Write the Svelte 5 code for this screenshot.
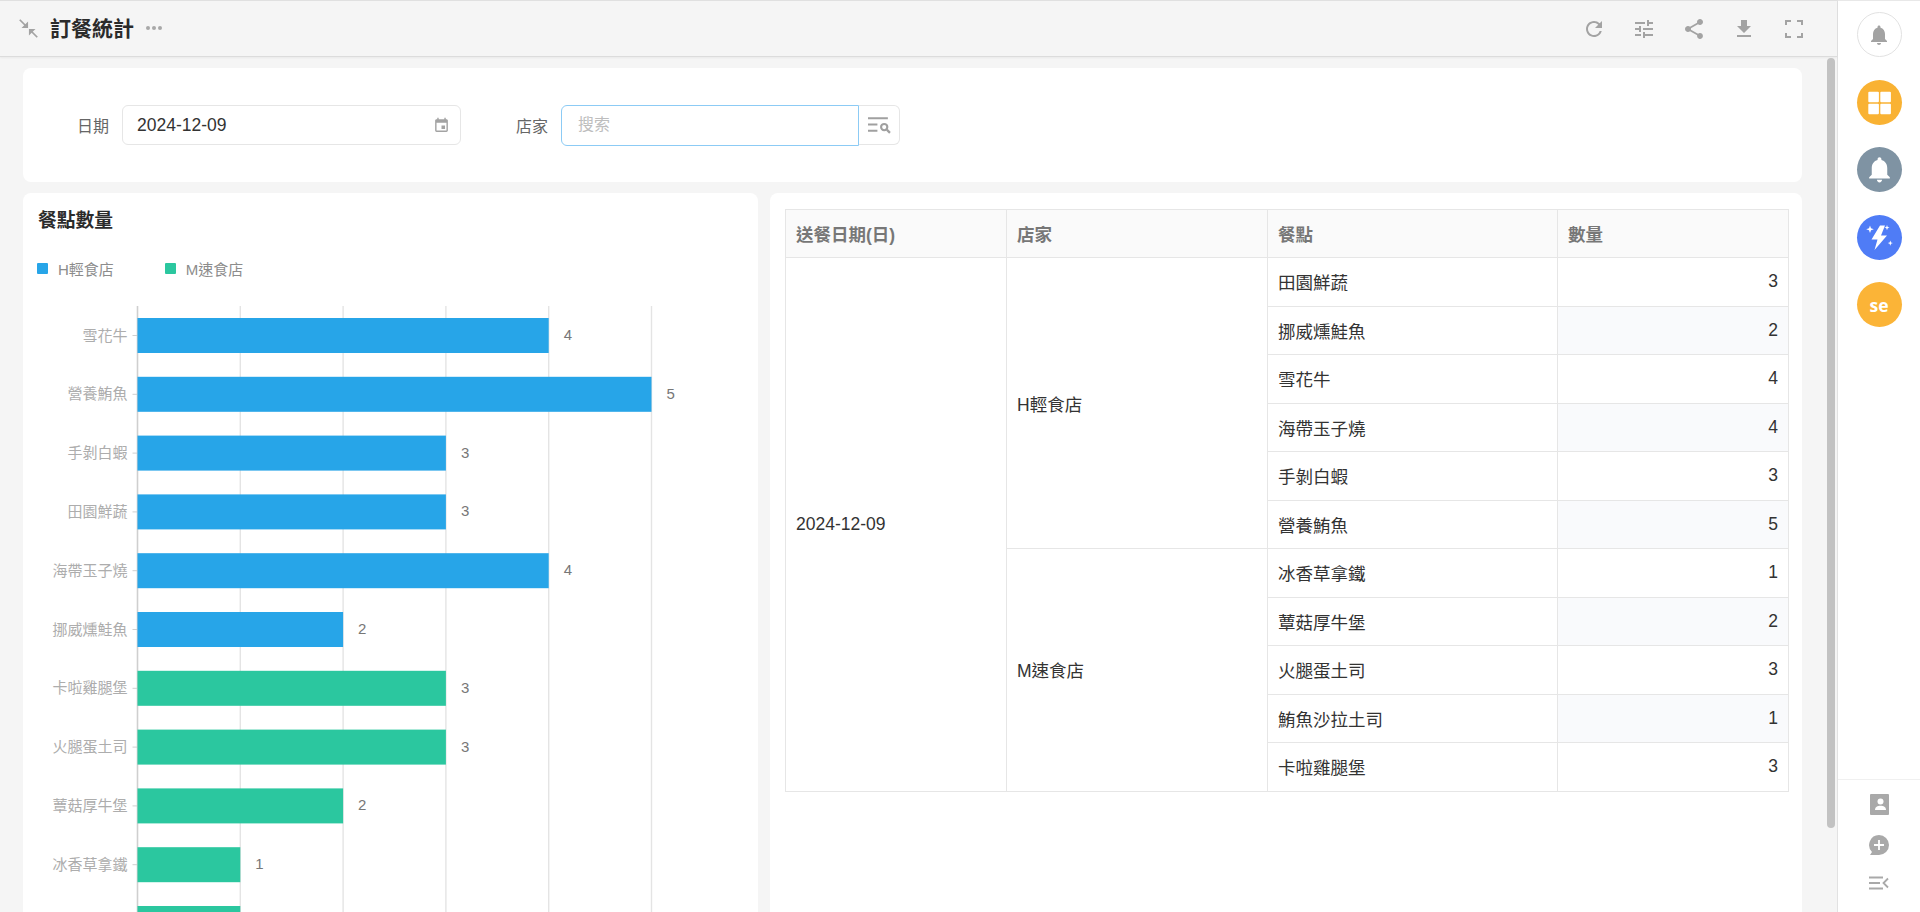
<script>
  const chartData = [
    { name: '雪花牛', value: 4, store: 'h' },
    { name: '營養鮪魚', value: 5, store: 'h' },
    { name: '手剝白蝦', value: 3, store: 'h' },
    { name: '田園鮮蔬', value: 3, store: 'h' },
    { name: '海帶玉子燒', value: 4, store: 'h' },
    { name: '挪威燻鮭魚', value: 2, store: 'h' },
    { name: '卡啦雞腿堡', value: 3, store: 'm' },
    { name: '火腿蛋土司', value: 3, store: 'm' },
    { name: '蕈菇厚牛堡', value: 2, store: 'm' },
    { name: '冰香草拿鐵', value: 1, store: 'm' },
    { name: '鮪魚沙拉土司', value: 1, store: 'm' }
  ];

  const stores = [
    {
      name: 'H輕食店',
      items: [['田園鮮蔬', 3], ['挪威燻鮭魚', 2], ['雪花牛', 4], ['海帶玉子燒', 4], ['手剝白蝦', 3], ['營養鮪魚', 5]]
    },
    {
      name: 'M速食店',
      items: [['冰香草拿鐵', 1], ['蕈菇厚牛堡', 2], ['火腿蛋土司', 3], ['鮪魚沙拉土司', 1], ['卡啦雞腿堡', 3]]
    }
  ];

  const totalRows = stores.reduce((n, s) => n + s.items.length, 0);

  const axisX = 114.5;
  const unit = 102.8;
  const rowStep = 58.8;
  const barTop = 12;
  const barHeight = 35;
  const colors = { h: '#27a5e8', m: '#2bc79f' };

  function rowIndex(storeIdx, itemIdx) {
    let n = itemIdx;
    for (let i = 0; i < storeIdx; i++) n += stores[i].items.length;
    return n;
  }
</script>

<div class="page">
  <div class="main">
    <header class="topbar">
      <svg class="collapse" viewBox="0 0 24 24" aria-hidden="true">
        <path d="M2 2 L10 10 M22 22 L14 14" stroke="#a3a3a3" stroke-width="2" fill="none" />
        <path d="M11.5 11.5 H4 L11.5 4 Z M12.5 12.5 H20 L12.5 20 Z" fill="#a3a3a3" />
      </svg>
      <h1>訂餐統計</h1>
      <span class="dots"><i></i><i></i><i></i></span>
      <div class="tools">
        <svg viewBox="0 0 24 24"><path d="M17.65 6.35A7.958 7.958 0 0012 4c-4.42 0-7.99 3.58-7.99 8s3.57 8 7.99 8c3.73 0 6.84-2.55 7.73-6h-2.08A5.99 5.99 0 0112 18c-3.31 0-6-2.69-6-6s2.69-6 6-6c1.66 0 3.14.69 4.22 1.78L13 11h7V4l-2.35 2.35z" /></svg>
        <svg viewBox="0 0 24 24"><path d="M3 17v2h6v-2H3zM3 5v2h10V5H3zm10 16v-2h8v-2h-8v-2h-2v6h2zM7 9v2H3v2h4v2h2V9H7zm14 4v-2H11v2h10zm-6-4h2V7h4V5h-4V3h-2v6z" /></svg>
        <svg viewBox="0 0 24 24"><path d="M18 16.08c-.76 0-1.44.3-1.96.77L8.91 12.7c.05-.23.09-.46.09-.7s-.04-.47-.09-.7l7.05-4.11c.54.5 1.25.81 2.04.81 1.66 0 3-1.34 3-3s-1.34-3-3-3-3 1.34-3 3c0 .24.04.47.09.7L8.04 9.81C7.5 9.31 6.79 9 6 9c-1.66 0-3 1.34-3 3s1.34 3 3 3c.79 0 1.5-.31 2.04-.81l7.12 4.16c-.05.21-.08.43-.08.65 0 1.61 1.31 2.92 2.92 2.92 1.61 0 2.92-1.31 2.92-2.92s-1.31-2.92-2.92-2.92z" /></svg>
        <svg viewBox="0 0 24 24"><path d="M19 9h-4V3H9v6H5l7 7 7-7zM5 18v2h14v-2H5z" /></svg>
        <svg viewBox="0 0 24 24"><path d="M3 8V3h6v2H5v3H3zm12-5h6v5h-2V5h-4V3zM3 16h2v3h4v2H3v-5zm16 0h2v5h-6v-2h4v-3z" /></svg>
      </div>
    </header>

    <div class="scroller">
      <div class="content">
        <section class="card filter">
          <label class="field-label date-label" for="date">日期</label>
          <div class="input date-input">
            <input id="date" value="2024-12-09" readonly />
            <svg viewBox="0 0 24 24"><path d="M17 12h-5v5h5v-5zM16 1v2H8V1H6v2H5c-1.11 0-1.99.9-1.99 2L3 19a2 2 0 002 2h14c1.1 0 2-.9 2-2V5c0-1.1-.9-2-2-2h-1V1h-2zm3 18H5V8h14v11z" /></svg>
          </div>
          <label class="field-label store-label" for="store">店家</label>
          <input id="store" class="input store-input" placeholder="搜索" />
          <button class="search-btn" aria-label="搜索">
            <svg viewBox="0 0 22 18">
              <path d="M0 2h19M0 8h9M0 14h9" stroke="#a0a0a0" stroke-width="2" fill="none" />
              <circle cx="15.5" cy="10.5" r="3" stroke="#a0a0a0" stroke-width="2" fill="none" />
              <path d="M18 13l3 3" stroke="#a0a0a0" stroke-width="2.2" fill="none" />
            </svg>
          </button>
        </section>

        <div class="columns">
          <section class="card chart-card">
            <h2>餐點數量</h2>
            <div class="legend">
              <span class="legend-item"><i style="background: {colors.h}"></i>H輕食店</span>
              <span class="legend-item"><i style="background: {colors.m}"></i>M速食店</span>
            </div>
            <svg class="chart" width="735" height="670" viewBox="0 0 735 670">
              {#each [1, 2, 3, 4, 5] as k}
                <line x1={axisX + unit * k} x2={axisX + unit * k} y1="0" y2="670" stroke="#e4e4e4" stroke-width="1.4" />
              {/each}
              <line x1={axisX} x2={axisX} y1="0" y2="670" stroke="#cfcfcf" stroke-width="1.6" />
              {#each chartData as d, i}
                {@const y = barTop + rowStep * i}
                <line x1={axisX - 5} x2={axisX} y1={y + barHeight / 2} y2={y + barHeight / 2} stroke="#cfcfcf" />
                <rect x={axisX} {y} width={unit * d.value} height={barHeight} fill={colors[d.store]} />
                <text class="tick" x={axisX - 10} y={y + barHeight / 2 - 0.5} text-anchor="end" dominant-baseline="central">{d.name}</text>
                <text class="val" x={axisX + unit * d.value + 15} y={y + barHeight / 2 - 1} dominant-baseline="central">{d.value}</text>
              {/each}
            </svg>
          </section>

          <section class="card table-card">
            <table>
              <colgroup>
                <col style="width: 221px" />
                <col style="width: 261px" />
                <col style="width: 290px" />
                <col style="width: 231px" />
              </colgroup>
              <thead>
                <tr>
                  <th>送餐日期(日)</th>
                  <th>店家</th>
                  <th>餐點</th>
                  <th>數量</th>
                </tr>
              </thead>
              <tbody>
                {#each stores as store, s}
                  {#each store.items as item, j}
                    <tr>
                      {#if s === 0 && j === 0}
                        <td rowspan={totalRows}>2024-12-09</td>
                      {/if}
                      {#if j === 0}
                        <td rowspan={store.items.length}>{store.name}</td>
                      {/if}
                      <td>{item[0]}</td>
                      <td class="num" class:striped={rowIndex(s, j) % 2 === 1}>{item[1]}</td>
                    </tr>
                  {/each}
                {/each}
              </tbody>
            </table>
          </section>
        </div>
      </div>
      <div class="thumb"></div>
    </div>
  </div>

  <aside class="side">
    <div class="side-top">
      <div class="circle outline">
        <svg viewBox="0 0 24 24"><path fill="#a3a3a3" d="M12 22c1.1 0 2-.9 2-2h-4c0 1.1.9 2 2 2zm6-6v-5c0-3.07-1.63-5.64-4.5-6.32V4c0-.83-.67-1.5-1.5-1.5s-1.5.67-1.5 1.5v.68C7.64 5.36 6 7.92 6 11v5l-2 2v1h16v-1l-2-2z" /></svg>
      </div>
      <div class="circle orange">
        <svg class="full" viewBox="0 0 45 45">
          <rect x="11.3" y="11.7" width="10.6" height="10.6" rx="1" fill="#fff" />
          <rect x="23.3" y="11.7" width="10.6" height="10.6" rx="1" fill="#fff" />
          <rect x="11.3" y="23.7" width="10.6" height="10.6" rx="1" fill="#fff" />
          <rect x="23.3" y="23.7" width="10.6" height="10.6" rx="1" fill="#fff" />
        </svg>
      </div>
      <div class="circle slate">
        <svg class="big" viewBox="0 0 24 24"><path fill="#fff" d="M12 22c1.1 0 2-.9 2-2h-4c0 1.1.9 2 2 2zm6-6v-5c0-3.07-1.63-5.64-4.5-6.32V4c0-.83-.67-1.5-1.5-1.5s-1.5.67-1.5 1.5v.68C7.64 5.36 6 7.92 6 11v5l-2 2v1h16v-1l-2-2z" /></svg>
      </div>
      <div class="circle blue">
        <svg class="full" viewBox="0 0 45 45">
          <path fill="#fff" d="M23 10.5 L14.5 24.5 H20.5 L17.5 35 L30 20.5 H24 L28 10.5 Z" />
          <path fill="#fff" d="M13 10.5 L14 13.3 L16.8 14.3 L14 15.3 L13 18.1 L12 15.3 L9.2 14.3 L12 13.3 Z" />
          <path fill="#fff" d="M30 10 L30.7 11.9 L32.6 12.6 L30.7 13.3 L30 15.2 L29.3 13.3 L27.4 12.6 L29.3 11.9 Z" />
          <path fill="#fff" d="M33.3 25.5 L34 27.4 L35.9 28.1 L34 28.8 L33.3 30.7 L32.6 28.8 L30.7 28.1 L32.6 27.4 Z" />
        </svg>
      </div>
      <div class="circle amber">se</div>
    </div>
    <div class="side-bottom">
      <svg class="contact" viewBox="0 0 19 21">
        <rect x="0" y="0" width="19" height="21" rx="1" fill="#a9a9a9" />
        <circle cx="10.5" cy="7.5" r="3" fill="#fff" />
        <path d="M5 16c0-3 2.5-4.3 5.5-4.3S16 13 16 16z" fill="#fff" />
      </svg>
      <svg class="chat" viewBox="0 0 22 22">
        <path d="M11 1a10 10 0 0 1 0 20H2l2-3A10 10 0 0 1 11 1z" fill="#a9a9a9" />
        <path d="M11 6v10M6 11h10" stroke="#fff" stroke-width="1.8" />
      </svg>
      <svg class="menu" viewBox="0 0 20 14">
        <path d="M0 1.5h14M0 7h11M0 12.5h14" stroke="#a9a9a9" stroke-width="1.8" fill="none" />
        <path d="M19 2.5L14.5 7L19 11.5" stroke="#a9a9a9" stroke-width="1.8" fill="none" />
      </svg>
    </div>
  </aside>
</div>

<style>
  :global(body) {
    margin: 0;
    overflow: hidden;
    font-family: "Liberation Sans", "Noto Sans CJK TC", sans-serif;
    color: #333;
  }

  .page {
    display: flex;
    width: 1920px;
    height: 912px;
    background: #fff;
  }

  .main {
    width: 1838px;
    height: 912px;
    display: flex;
    flex-direction: column;
    background: #f5f5f5;
    border-right: 1px solid #e2e2e2;
    box-sizing: border-box;
  }

  .topbar {
    height: 57px;
    flex: none;
    box-sizing: border-box;
    display: flex;
    align-items: center;
    padding: 0 31px 0 18px;
    background: #f5f5f5;
    border-top: 1px solid #e0e0e0;
    border-bottom: 1px solid #dcdcdc;
    box-shadow: 0 1px 2px rgba(0, 0, 0, 0.05);
  }

  .collapse {
    width: 21px;
    height: 21px;
    margin-right: 11px;
  }

  h1 {
    margin: 0;
    font-size: 21px;
    font-weight: 700;
    color: #2b2b2b;
    line-height: 1;
  }

  .dots {
    display: flex;
    gap: 2px;
    margin-left: 12px;
    margin-top: -2px;
  }

  .dots i {
    width: 4px;
    height: 4px;
    border-radius: 50%;
    background: #a8a8a8;
  }

  .tools {
    margin-left: auto;
    display: flex;
    gap: 26px;
  }

  .tools svg {
    width: 24px;
    height: 24px;
    fill: #a3a3a3;
  }

  .scroller {
    flex: 1;
    min-height: 0;
    overflow: hidden;
    position: relative;
  }

  /* headless chrome hides real scrollbars, so the thumb is drawn over the content */
  .thumb {
    position: absolute;
    top: 1px;
    right: 2px;
    width: 8px;
    height: 770px;
    border-radius: 4px;
    background: #c2c2c2;
  }

  .content {
    padding: 11px 35px 14px 23px;
    height: 949px;
    box-sizing: border-box;
    display: flex;
    flex-direction: column;
    gap: 11px;
  }

  .card {
    background: #fff;
    border-radius: 8px;
  }

  .filter {
    height: 114px;
    flex: none;
    display: flex;
    align-items: center;
    padding-left: 54px;
    box-sizing: border-box;
  }

  .field-label {
    font-size: 16px;
    color: #666;
    width: 32px;
    flex: none;
  }

  .date-label {
    margin-right: 13px;
  }

  .store-label {
    margin-left: 55px;
    margin-right: 13px;
  }

  .input {
    box-sizing: border-box;
    height: 40px;
    border: 1px solid #e6e6e6;
    border-radius: 6px;
    background: #fff;
  }

  .date-input {
    width: 339px;
    display: flex;
    align-items: center;
    padding: 0 10px 0 14px;
  }

  .date-input input {
    flex: 1;
    min-width: 0;
    border: 0;
    outline: 0;
    padding: 0;
    font: 17.5px "Liberation Sans", "Noto Sans CJK TC", sans-serif;
    color: #333;
  }

  .date-input svg {
    width: 17px;
    height: 17px;
    fill: #a3a3a3;
  }

  .store-input {
    width: 298px;
    height: 41px;
    padding: 0 16px;
    border-color: #8ccbf5;
    border-width: 1.5px;
    border-radius: 6px 0 0 6px;
    outline: 0;
    font: 16px "Liberation Sans", "Noto Sans CJK TC", sans-serif;
  }

  .store-input::placeholder {
    color: #bdbdbd;
  }

  .search-btn {
    width: 41px;
    height: 40px;
    padding: 0;
    display: flex;
    align-items: center;
    justify-content: center;
    background: #fff;
    border: 1px solid #e6e6e6;
    border-left: 0;
    border-radius: 0 6px 6px 0;
  }

  .search-btn svg {
    width: 23px;
    height: 19px;
  }

  .columns {
    flex: 1;
    min-height: 0;
    display: flex;
    gap: 12px;
  }

  .chart-card {
    width: 735px;
    flex: none;
    overflow: hidden;
  }

  h2 {
    margin: 16px 0 0 15px;
    font-size: 18.75px;
    font-weight: 700;
    line-height: 24px;
    color: #2b2b2b;
  }

  .legend {
    display: flex;
    gap: 51px;
    margin: 23px 0 0 14px;
    height: 24px;
    align-items: center;
  }

  .legend-item {
    display: flex;
    align-items: center;
    gap: 10px;
    font-size: 15px;
    color: #8c8c8c;
  }

  .legend-item i {
    width: 11px;
    height: 11px;
    border-radius: 1px;
  }

  .chart {
    display: block;
    margin-top: 26px;
  }

  .tick {
    font-size: 15px;
    fill: #adadad;
  }

  .val {
    font-size: 15px;
    fill: #777;
  }

  .table-card {
    flex: 1;
    min-width: 0;
    padding: 16px 13px 0 15px;
    box-sizing: border-box;
  }

  table {
    width: 1003px;
    table-layout: fixed;
    border-collapse: collapse;
    font-size: 17.5px;
  }

  th,
  td {
    border: 1px solid #e6e6e6;
    padding: 0 10px;
    text-align: left;
    font-weight: 400;
    box-sizing: border-box;
    height: 48.5px;
  }

  th {
    height: 48px;
    font-size: 17.5px;
    font-weight: 700;
    color: #777;
    background: #fafafa;
  }

  td.num {
    text-align: right;
  }

  td.striped {
    background: #f9fafc;
  }

  .side {
    flex: 1;
    display: flex;
    flex-direction: column;
    align-items: center;
    justify-content: space-between;
    border-top: 1px solid #e8e8e8;
    box-sizing: border-box;
  }

  .side-top {
    padding-top: 11px;
    display: flex;
    flex-direction: column;
    gap: 22.5px;
  }

  .circle {
    width: 45px;
    height: 45px;
    border-radius: 50%;
    box-sizing: border-box;
    display: flex;
    align-items: center;
    justify-content: center;
    font-size: 17.5px;
    font-weight: 700;
    font-family: "Open Sans", sans-serif;
    color: #fff;
  }

  .circle svg {
    width: 24px;
    height: 24px;
  }

  .circle svg.big {
    width: 31px;
    height: 31px;
  }

  .circle svg.full {
    width: 45px;
    height: 45px;
  }

  .outline {
    border: 1px solid #e2e2e2;
  }

  .orange {
    background: #f9b233;
  }

  .slate {
    background: #7f93a3;
  }

  .blue {
    background: #4f7cf6;
  }

  .amber {
    background: #fbb437;
  }

  .side-bottom {
    width: 100%;
    height: 133px;
    box-sizing: border-box;
    border-top: 1px solid #f0f0f0;
    display: flex;
    flex-direction: column;
    align-items: center;
    padding-top: 14px;
  }

  .contact {
    width: 19px;
    height: 21px;
  }

  .chat {
    width: 22px;
    height: 22px;
    margin-top: 19px;
  }

  .menu {
    width: 20px;
    height: 14px;
    margin-top: 20px;
  }
</style>
